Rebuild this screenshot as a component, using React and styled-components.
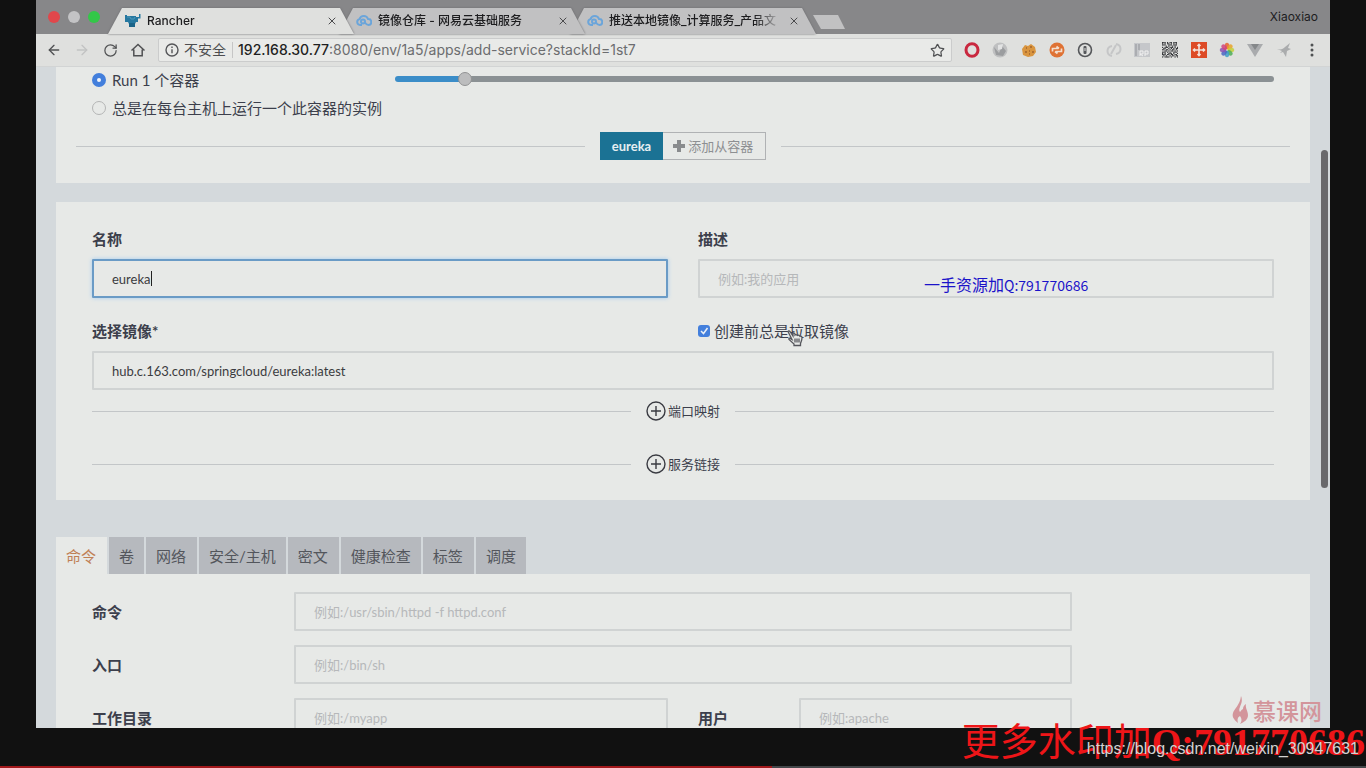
import React from "react";
import styled, { createGlobalStyle, css } from "styled-components";
import { ArrowLeft, ArrowRight, RotateCw, Star, X } from "lucide-react";

const sans = `Inter, Roboto, "Noto Sans CJK SC", sans-serif`;
const lato = `Lato, "Noto Sans CJK SC", sans-serif`;

const Global = createGlobalStyle`
  * { box-sizing: border-box; }
  body { margin: 0; background: #111; font-family: ${lato}; color: #3c3f4c; }
  button, input { font-family: inherit; }
  button { border: 0; padding: 0; background: none; color: inherit; }
`;

const Screen = styled.div`
  position: relative;
  height: 100vh;
  padding: 0 36px 40px;
  display: flex;
  flex-direction: column;
  overflow: hidden;
`;
const Browser = styled.div`
  flex: 1;
  min-height: 0;
  display: flex;
  flex-direction: column;
  font-family: ${sans};
`;

/* ---------- tab strip ---------- */
const TabStrip = styled.div`
  flex: none;
  height: 34px;
  padding: 0 12px;
  display: flex;
  align-items: flex-end;
  background: #878789;
`;
const Lights = styled.div`
  display: flex;
  gap: 8px;
  width: 60px;
  height: 34px;
  align-items: center;
`;
const Light = styled.button`
  width: 12px;
  height: 12px;
  border-radius: 50%;
  background: ${(p) => p.$color};
`;
const BrowserTab = styled.div`
  position: relative;
  z-index: ${(p) => p.$z};
  flex: 0 1 246px;
  min-width: 0;
  height: 26px;
  padding: 0 16px 0 17px;
  margin-right: -15px;
  display: flex;
  align-items: center;
  gap: 6px;
  filter: drop-shadow(0 0 1px #6b6b6e);
  &::before {
    content: "";
    position: absolute;
    inset: 0;
    z-index: -1;
    background: ${(p) => (p.$active ? "#dfe0de" : "#c1c1c2")};
    clip-path: polygon(14px 0, calc(100% - 14px) 0, 100% 100%, 0 100%);
  }
`;
const TabTitle = styled.span`
  flex: 1;
  overflow: hidden;
  white-space: nowrap;
  font-size: 12px;
  font-weight: 500;
  line-height: 18px;
  color: #1d1d1f;
  mask-image: linear-gradient(to right, #000 146px, transparent 172px);
`;
const CloseButton = styled.button`
  display: flex;
  color: #4b4b4d;
`;
const NewTab = styled.button`
  width: 32px;
  height: 14px;
  margin: 0 0 5px 12px;
  background: #c1c1c2;
  clip-path: polygon(0 0, 25px 0, 100% 100%, 8px 100%);
`;
const Profile = styled.button`
  margin-left: auto;
  align-self: center;
  font-size: 12px;
  line-height: 34px;
  color: #1d1d1f;
`;

/* ---------- toolbar ---------- */
const Toolbar = styled.div`
  flex: none;
  height: 33px;
  padding: 0 10px;
  display: flex;
  align-items: center;
  gap: 12px;
  background: #dfe0de;
  border-bottom: 1px solid #d2d4d4;
`;
const IconButton = styled.button`
  display: flex;
  width: 16px;
  height: 16px;
  align-items: center;
  justify-content: center;
  color: ${(p) => (p.$dim ? "#c2c3c3" : "#505153")};
`;
const AddressBar = styled.div`
  flex: 1;
  min-width: 0;
  height: 24px;
  padding: 0 6px;
  display: flex;
  align-items: center;
  gap: 5px;
  background: #e9eae8;
  border: 1px solid #cbcccc;
  border-radius: 2px;
`;
const Security = styled.span`
  padding-right: 6px;
  border-right: 1px solid #c6c6c6;
  font-size: 14px;
  line-height: 16px;
  color: #4d4e50;
`;
const Url = styled.span`
  flex: 1;
  overflow: hidden;
  white-space: nowrap;
  font-size: 14px;
  line-height: 18px;
  color: #6c6d6f;
  b { font-weight: 500; color: #1f1f22; }
`;
const Extensions = styled.div`
  flex: 0 0 356px;
  display: flex;
  justify-content: space-between;
`;

/* ---------- page ---------- */
const Viewport = styled.div`
  position: relative;
  flex: 1;
  min-height: 0;
  overflow: hidden;
  padding: 0 20px;
  background: #d4d9dc;
  font-family: ${lato};
`;
const ScrollThumb = styled.div`
  position: absolute;
  right: 2px;
  top: 83px;
  width: 7px;
  height: 338px;
  border-radius: 4px;
  background: #69696c;
`;
const Panel = styled.section`
  padding: ${(p) => p.$pad};
  margin-bottom: ${(p) => p.$gap || 0}px;
  background: #e7e9e7;
`;
const Grid = styled.div`
  display: grid;
  grid-template-columns: repeat(12, minmax(0, 1fr));
  column-gap: 30px;
  align-items: center;
  padding: 0 ${(p) => p.$inset || 0}px;
  margin-bottom: ${(p) => p.$gap || 0}px;
`;
const Cell = styled.div`
  position: relative;
  grid-column: span ${(p) => p.$span};
  align-self: ${(p) => (p.$top ? "start" : "auto")};
`;
const ChoiceLabel = styled.label`
  display: flex;
  align-items: center;
  gap: ${(p) => p.$gap}px;
  font-size: 15px;
  line-height: ${(p) => p.$line}px;
  white-space: nowrap;
`;
const Radio = styled.input`
  appearance: none;
  width: 14px;
  height: 14px;
  margin: 0;
  border-radius: 50%;
  border: 1px solid #b4b5b5;
  &:checked {
    border: 5px solid #437fdc;
    background: #f3f6fa;
  }
`;
const RadioList = styled.div`
  display: grid;
  gap: 2px;
`;
const Check = styled.input`
  appearance: none;
  width: 12px;
  height: 12px;
  margin: 0;
  border-radius: 3px;
  background: #437fdc;
`;
const CheckMark = styled.svg`
  position: absolute;
  left: 0;
  top: 4px;
  pointer-events: none;
`;
const Slider = styled.input`
  appearance: none;
  display: block;
  width: 100%;
  height: 6px;
  margin: 9px 0 0;
  border-radius: 3px;
  background: linear-gradient(to right, #3b8dc8 8%, #8b9194 8%);
  &::-webkit-slider-thumb {
    appearance: none;
    width: 14px;
    height: 14px;
    border-radius: 50%;
    border: 1px solid #929394;
    background: #bcbdbe;
  }
`;
const Divider = styled.div`
  display: flex;
  align-items: center;
  gap: 15px;
  height: ${(p) => p.$height}px;
  margin-top: ${(p) => p.$top}px;
  &::before, &::after {
    content: "";
    flex: 1;
    height: 1px;
    background: #c3c6c8;
  }
`;
const ButtonGroup = styled.div`
  display: flex;
  height: 28px;
`;
const GroupButton = styled.button`
  display: flex;
  align-items: center;
  gap: 2px;
  padding: 0 12px 0 ${(p) => (p.$primary ? 12 : 9)}px;
  font-size: 13px;
  line-height: 18px;
  ${(p) =>
    p.$primary
      ? css`background: #1b7294; color: #e6eef1; font-weight: 700;`
      : css`border: 1px solid #b0b2b4; border-left: 0; color: #8d8f92;`}
`;
const AddButton = styled.button`
  display: flex;
  align-items: center;
  gap: 2px;
  font-size: 13px;
  line-height: 22px;
`;
const FieldLabel = styled.label`
  display: block;
  grid-column: span ${(p) => p.$span || 1};
  font-size: 15px;
  font-weight: 700;
  line-height: 20px;
  white-space: nowrap;
`;
const TextInput = styled.input`
  display: block;
  width: 100%;
  height: 39px;
  padding: 0 18px;
  border: 2px solid #d0d3d3;
  border-radius: 1px;
  background: transparent;
  font-size: 13px;
  color: #3b3c40;
  outline: none;
  &::placeholder { color: #b6b8ba; opacity: 1; }
  ${(p) =>
    p.$focused &&
    css`border-color: #6a9bc6; box-shadow: 0 0 4px #a4cdf0;`}
`;
const Caret = styled.span`
  position: absolute;
  left: 59px;
  top: 12px;
  width: 1px;
  height: 15px;
  background: #222;
`;
const SectionTabs = styled.div`
  display: flex;
  gap: 2px;
  line-height: 20px;
`;
const SectionTab = styled.button`
  height: 37px;
  padding: 0 10px;
  font-size: 15px;
  background: ${(p) => (p.$active ? "#e7e9e7" : "#b6b9be")};
  color: ${(p) => (p.$active ? "#c08055" : "#53565c")};
  &:nth-child(odd) { padding-right: 11px; }
`;

/* ---------- overlays ---------- */
const BlueNote = styled.div`
  position: absolute;
  left: 888px;
  top: 205px;
  font: 16px/24px "Noto Sans CJK SC", sans-serif;
  color: #1b13c9;
  white-space: nowrap;
  span { font-size: 14px; }
`;
const Pointer = styled.svg`
  position: absolute;
  left: 751px;
  top: 262px;
`;
const Brand = styled.div`
  position: absolute;
  right: 8px;
  bottom: 3px;
  display: flex;
  align-items: center;
  gap: 3px;
  color: #d3959b;
  font: 500 23px/30px "Noto Sans CJK SC", sans-serif;
`;
const RedMark = styled.div`
  position: absolute;
  right: 1px;
  bottom: 3px;
  font: 38px/46px "Liberation Serif", "Noto Sans CJK SC", serif;
  color: #ee1518;
  white-space: nowrap;
  b { font-weight: 700; }
`;
const SourceMark = styled.div`
  position: absolute;
  right: 7px;
  bottom: 9px;
  font: 16px/20px "Liberation Sans", sans-serif;
  color: #d2d2d2;
  white-space: nowrap;
`;
const Progress = styled.div`
  position: absolute;
  left: 0;
  right: 0;
  bottom: 0;
  height: 2px;
  background: linear-gradient(to right, #a3191c 56.5%, #44474a 56.5%);
`;

/* ---------- drawings ---------- */
const RancherIcon = () => (
  <svg width="16" height="16" viewBox="0 0 16 16">
    <path d="M0 2h2v1h9v1h3V1h1.500v4.500H13V9h-2l-1 2v3H4v-3L3 9H0z" fill="#2678a0" />
    <path d="M2 4h3l1 2h3l1-2" fill="none" stroke="#4d97b8" strokeWidth="1" />
    <path d="M4 10h6v4H4z" fill="#1a6489" />
  </svg>
);
const CloudIcon = () => (
  <svg width="16" height="16" viewBox="0 0 16 16" fill="none" stroke="#6ba5da" strokeWidth="2">
    <path d="M6 12H4a3 3 0 0 1-.5-5.9A4.5 4.5 0 0 1 12 6a3 3 0 0 1 .5 6c-2 0-3-1.500-4-3" />
    <circle cx="7" cy="8.500" r="2" />
  </svg>
);
const HomeIcon = () => (
  <svg width="16" height="16" viewBox="0 0 16 16" fill="none" stroke="currentColor" strokeWidth="1.500">
    <path d="M1.500 8.500 8 2.500l6.500 6M3.800 7.500v6.200h8.400V7.500" />
  </svg>
);
const InfoIcon = () => (
  <svg width="14" height="14" viewBox="0 0 14 14" fill="none" stroke="#555659" strokeWidth="1.400">
    <circle cx="7" cy="7" r="6" />
    <path d="M7 6.200v4M7 3.500v1.500" />
  </svg>
);
const PlusIcon = () => (
  <svg width="14" height="14" viewBox="0 0 14 14">
    <path d="M5 1h4v4h4v4H9v4H5V9H1V5h4z" fill="#898b8d" />
  </svg>
);
const CirclePlus = () => (
  <svg width="20" height="20" viewBox="0 0 20 20" fill="none" stroke="#3a3b42" strokeWidth="1.400">
    <circle cx="10" cy="10" r="9" />
    <path d="M10 5v10M5 10h10" />
  </svg>
);
const FlameIcon = () => (
  <svg width="18" height="28" viewBox="0 0 18 28" fill="currentColor">
    <path d="M9 0c2 5 0 8-1 11-1 2-1 4 0 5 1-1 1-2 3-3 0-2 1-4 3-5-1 4 2 7 2 11 0 5-4 7-8 9 2-3 2-5 0-8-2 1-3 3-2 7C1 23 0 20 1 17c1-4 7-8 8-17z" />
  </svg>
);

const petals = ["#e8632f", "#e9a32a", "#c6cf3b", "#4fae57", "#3f9fc8", "#4b66c4", "#8d53b4", "#d2447a"];
const qr = [
  "1110101101110", "1010110101010", "1110011101110", "0001010010100", "1011101110101", "0110010101011",
  "1101101011010", "0011010110101", "1110101001110", "1010011101001", "1110110110110", "0101001011011",
  "1011110100101",
];
const extensions = [
  ["Opera", <ellipse key="a" cx="8" cy="8" rx="6" ry="6.300" fill="none" stroke="#c9283f" strokeWidth="3" />],
  ["Globe", <g key="a"><circle cx="8" cy="8" r="7.500" fill="#bfc0c1" /><path d="M2 5l5 6 3-7 4 5-3 5-7-1z" fill="#9b9d9f" /><path d="M6 3l5-1-1 5-4 1z" fill="#e2e3e3" /></g>],
  ["Cookie", <g key="a"><path d="M1 7l3-4 3 1 3-2 4 3 1 5-3 4-5 1-5-2z" fill="#d9953f" /><path d="M5 6h1M9 5h2M4 10h2M8 9h1M11 10h2M8 12h1" stroke="#a3642c" strokeWidth="1.600" /></g>],
  ["Switch", <g key="a"><circle cx="8" cy="8" r="7.500" fill="#df7234" /><path d="M3.500 9.500V6.500h6M7.500 4.500l2.500 2M12.500 6.500v3h-6M8.500 11.500L6 9.500" fill="none" stroke="#f3dfcf" strokeWidth="1.700" /></g>],
  ["Password", <g key="a"><circle cx="8" cy="8" r="6.500" fill="none" stroke="#55575a" strokeWidth="1.600" /><rect x="6.500" y="4" width="3" height="8" rx="1" fill="#55575a" /><path d="M8 6v3" stroke="#dfe0de" /></g>],
  ["Sync", <g key="a" fill="none" stroke="#c5c6c7" strokeWidth="2"><path d="M6 14C0 13 0 5 6 4M10 2c6 1 6 9 0 10" /><path d="M5 12l5-9" /></g>],
  ["RP", <g key="a"><path d="M0 1h16v14H0z" fill="#c5c7ca" /><path d="M2 2v12M5 2v6" stroke="#a2a5a9" strokeWidth="1.500" /><path d="M6 14V9h3v3H6l3 2M11 14V9h3v3h-3" stroke="#f1f1f1" fill="none" /></g>],
  ["QR code", <g key="a" fill="#333437">{qr.flatMap((row, y) => [...row].map((c, x) => c === "1" && <rect key={`${x}-${y}`} x={x * 1.25} y={y * 1.2} width="1.200" height="1.150" />))}</g>],
  ["Capture", <g key="a"><path d="M0 0h16v16H0z" fill="#dd4b26" /><path d="M8 2v12M2 8h12M6.500 4L8 2.500 9.500 4M6.500 12L8 13.500 9.500 12M4 6.500L2.500 8 4 9.500M12 6.500L13.500 8 12 9.500" stroke="#f3e3dc" strokeWidth="1.600" fill="none" /></g>],
  ["Photos", <g key="a">{petals.map((c, i) => <ellipse key={c} cx="8" cy="4" rx="2.200" ry="3.200" fill={c} opacity="0.85" transform={`rotate(${i * 45} 8 8)`} />)}</g>],
  ["Vue", <g key="a"><path d="M0 2h16L8 15z" fill="#a9abad" /><path d="M4 2h8L8 8z" fill="#85888a" /></g>],
  ["Bird", <path key="a" d="M1 7c4 1 6 0 8-2l5-4-2 5 3 1-4 2-1 6-3-5-3 1 2-2z" fill="#aaacad" />],
  ["Menu", <g key="a" fill="#4f5153"><circle cx="8" cy="3" r="1.500" /><circle cx="8" cy="8" r="1.500" /><circle cx="8" cy="13" r="1.500" /></g>],
];

const browserTabs = [
  { title: "Rancher", icon: <RancherIcon />, active: true },
  { title: "镜像仓库 - 网易云基础服务", icon: <CloudIcon /> },
  { title: "推送本地镜像_计算服务_产品文", icon: <CloudIcon /> },
];
const sections = ["命令", "卷", "网络", "安全/主机", "密文", "健康检查", "标签", "调度"];

export default function App() {
  return (
    <Screen>
      <Global />
      <Browser>
        <TabStrip>
          <Lights>
            <Light $color="#e0474b" aria-label="Close window" />
            <Light $color="#c3c3c5" aria-label="Minimise window" />
            <Light $color="#33c748" aria-label="Zoom window" />
          </Lights>
          {browserTabs.map((t, i) => (
            <BrowserTab key={t.title} $active={t.active} $z={3 - i}>
              {t.icon}
              <TabTitle>{t.title}</TabTitle>
              <CloseButton aria-label="Close tab"><X size={12} strokeWidth={2} /></CloseButton>
            </BrowserTab>
          ))}
          <NewTab aria-label="New tab" />
          <Profile>Xiaoxiao</Profile>
        </TabStrip>

        <Toolbar>
          <IconButton aria-label="Back"><ArrowLeft size={18} /></IconButton>
          <IconButton $dim aria-label="Forward"><ArrowRight size={18} /></IconButton>
          <IconButton aria-label="Reload"><RotateCw size={15} /></IconButton>
          <IconButton aria-label="Home"><HomeIcon /></IconButton>
          <AddressBar>
            <InfoIcon />
            <Security>不安全</Security>
            <Url><b>192.168.30.77</b>:8080/env/1a5/apps/add-service?stackId=1st7</Url>
            <IconButton aria-label="Bookmark"><Star size={15} /></IconButton>
          </AddressBar>
          <Extensions>
            {extensions.map(([name, art]) => (
              <IconButton key={name} aria-label={name}>
                <svg width="16" height="16" viewBox="0 0 16 16">{art}</svg>
              </IconButton>
            ))}
          </Extensions>
        </Toolbar>

        <Viewport>
          <Panel $pad="0 20px 23px" $gap={19}>
            <Grid $inset={16}>
              <Cell $span={3}>
                <RadioList>
                  <ChoiceLabel $gap={6} $line={26}>
                    <Radio type="radio" name="scale" defaultChecked />Run 1 个容器
                  </ChoiceLabel>
                  <ChoiceLabel $gap={6} $line={26}>
                    <Radio type="radio" name="scale" />总是在每台主机上运行一个此容器的实例
                  </ChoiceLabel>
                </RadioList>
              </Cell>
              <Cell $span={9} $top>
                <Slider type="range" min="0" max="1000" defaultValue="73" aria-label="容器数量" />
              </Cell>
            </Grid>
            <Divider $height={28} $top={11}>
              <ButtonGroup>
                <GroupButton $primary>eureka</GroupButton>
                <GroupButton><PlusIcon />添加从容器</GroupButton>
              </ButtonGroup>
            </Divider>
          </Panel>

          <Panel $pad="27px 36px 25px" $gap={37}>
            <Grid $gap={10}>
              <FieldLabel $span={6} htmlFor="name">名称</FieldLabel>
              <FieldLabel $span={6} htmlFor="desc">描述</FieldLabel>
            </Grid>
            <Grid $gap={23}>
              <Cell $span={6}>
                <TextInput id="name" defaultValue="eureka" $focused />
                <Caret />
              </Cell>
              <Cell $span={6}><TextInput id="desc" placeholder="例如:我的应用" /></Cell>
            </Grid>
            <Grid $gap={10}>
              <FieldLabel $span={6} htmlFor="image">选择镜像*</FieldLabel>
              <Cell $span={6}>
                <ChoiceLabel $gap={4} $line={20}>
                  <Check type="checkbox" defaultChecked />创建前总是拉取镜像
                </ChoiceLabel>
                <CheckMark width="12" height="12" viewBox="0 0 12 12" fill="none" stroke="#eaf0f8" strokeWidth="1.500">
                  <path d="M3 6l2.500 2.500L9.500 3" />
                </CheckMark>
              </Cell>
            </Grid>
            <TextInput id="image" defaultValue="hub.c.163.com/springcloud/eureka:latest" />
            <Divider $height={22} $top={10}><AddButton><CirclePlus />端口映射</AddButton></Divider>
            <Divider $height={22} $top={31}><AddButton><CirclePlus />服务链接</AddButton></Divider>
          </Panel>

          <SectionTabs role="tablist">
            {sections.map((s, i) => (
              <SectionTab key={s} role="tab" aria-selected={i === 0} $active={i === 0}>{s}</SectionTab>
            ))}
          </SectionTabs>
          <Panel $pad="18px 36px 18px">
            <Grid $gap={14}>
              <FieldLabel $span={2} htmlFor="cmd">命令</FieldLabel>
              <Cell $span={8}><TextInput id="cmd" placeholder="例如:/usr/sbin/httpd -f httpd.conf" /></Cell>
            </Grid>
            <Grid $gap={14}>
              <FieldLabel $span={2} htmlFor="entry">入口</FieldLabel>
              <Cell $span={8}><TextInput id="entry" placeholder="例如:/bin/sh" /></Cell>
            </Grid>
            <Grid>
              <FieldLabel $span={2} htmlFor="dir">工作目录</FieldLabel>
              <Cell $span={4}><TextInput id="dir" placeholder="例如:/myapp" /></Cell>
              <FieldLabel htmlFor="user">用户</FieldLabel>
              <Cell $span={3}><TextInput id="user" placeholder="例如:apache" /></Cell>
            </Grid>
          </Panel>

          <ScrollThumb />
          <BlueNote>一手资源加<span>Q:791770686</span></BlueNote>
          <Pointer width="17" height="18" viewBox="0 0 17 18" fill="#e7e9e7" stroke="#55565c" strokeWidth="1.300">
            <path d="M1 2.500c1-1.500 2 0 3 1.500l2 3V4.500c1-1 2 0 2 1V6c1-1 2 0 2.500.5 1-.8 2 0 2.500.8 1-.5 2 .2 2 1.200 0 3-1 4-1.500 6v2H7v-1.500L2 10.500c-.5-1.500 1-2 2-.5l1 .5z" />
            <path d="M8 9.500v4M10 9.500v4M12 9.500v4" />
          </Pointer>
          <Brand><FlameIcon />慕课网</Brand>
        </Viewport>
      </Browser>

      <RedMark>更多水印加<b>Q:791770686</b></RedMark>
      <SourceMark>https://blog.csdn.net/weixin_30947631</SourceMark>
      <Progress />
    </Screen>
  );
}
